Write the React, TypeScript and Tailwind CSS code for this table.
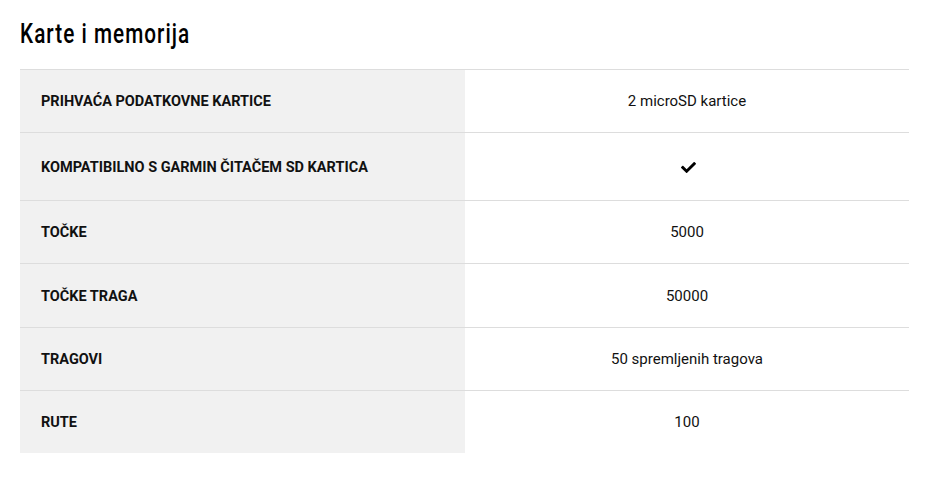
import { FaCheck } from "react-icons/fa";

const rows: { label: string; value: string | null; h: string }[] = [
  { label: "PRIHVAĆA PODATKOVNE KARTICE", value: "2 microSD kartice", h: "h-[63px]" },
  { label: "KOMPATIBILNO S GARMIN ČITAČEM SD KARTICA", value: null, h: "h-[68px]" },
  { label: "TOČKE", value: "5000", h: "h-[63px]" },
  { label: "TOČKE TRAGA", value: "50000", h: "h-[64px]" },
  { label: "TRAGOVI", value: "50 spremljenih tragova", h: "h-[63px]" },
  { label: "RUTE", value: "100", h: "h-[63px]" },
];

const App = () => {
  return (
    <div className="min-h-screen bg-white px-5 pt-[17px] font-['Roboto',sans-serif] text-[#111]">
      <div className="h-[52px]">
        {/* no condensed face installed, so squeeze Roboto */}
        <h2 className="inline-block origin-left scale-x-[0.74] font-['Roboto',sans-serif] text-[28px] font-medium leading-[34px] tracking-[1.4px] text-black">
          Karte i memorija
        </h2>
      </div>

      <div className="w-[889px]">
        {rows.map((row) => (
          <div key={row.label} className={`flex border-t border-[#dddddd] ${row.h}`}>
            <div className="flex w-[445px] items-center bg-[#f1f1f1] pl-[21px] pt-[2px] text-[14.5px] font-bold">
              {row.label}
            </div>
            <div className="flex flex-1 items-center justify-center pt-[1px] text-[15px]">
              {row.value ?? <FaCheck className="ml-[2px] h-[15px] w-[15px] text-black" />}
            </div>
          </div>
        ))}
      </div>
    </div>
  );
};

export default App;
